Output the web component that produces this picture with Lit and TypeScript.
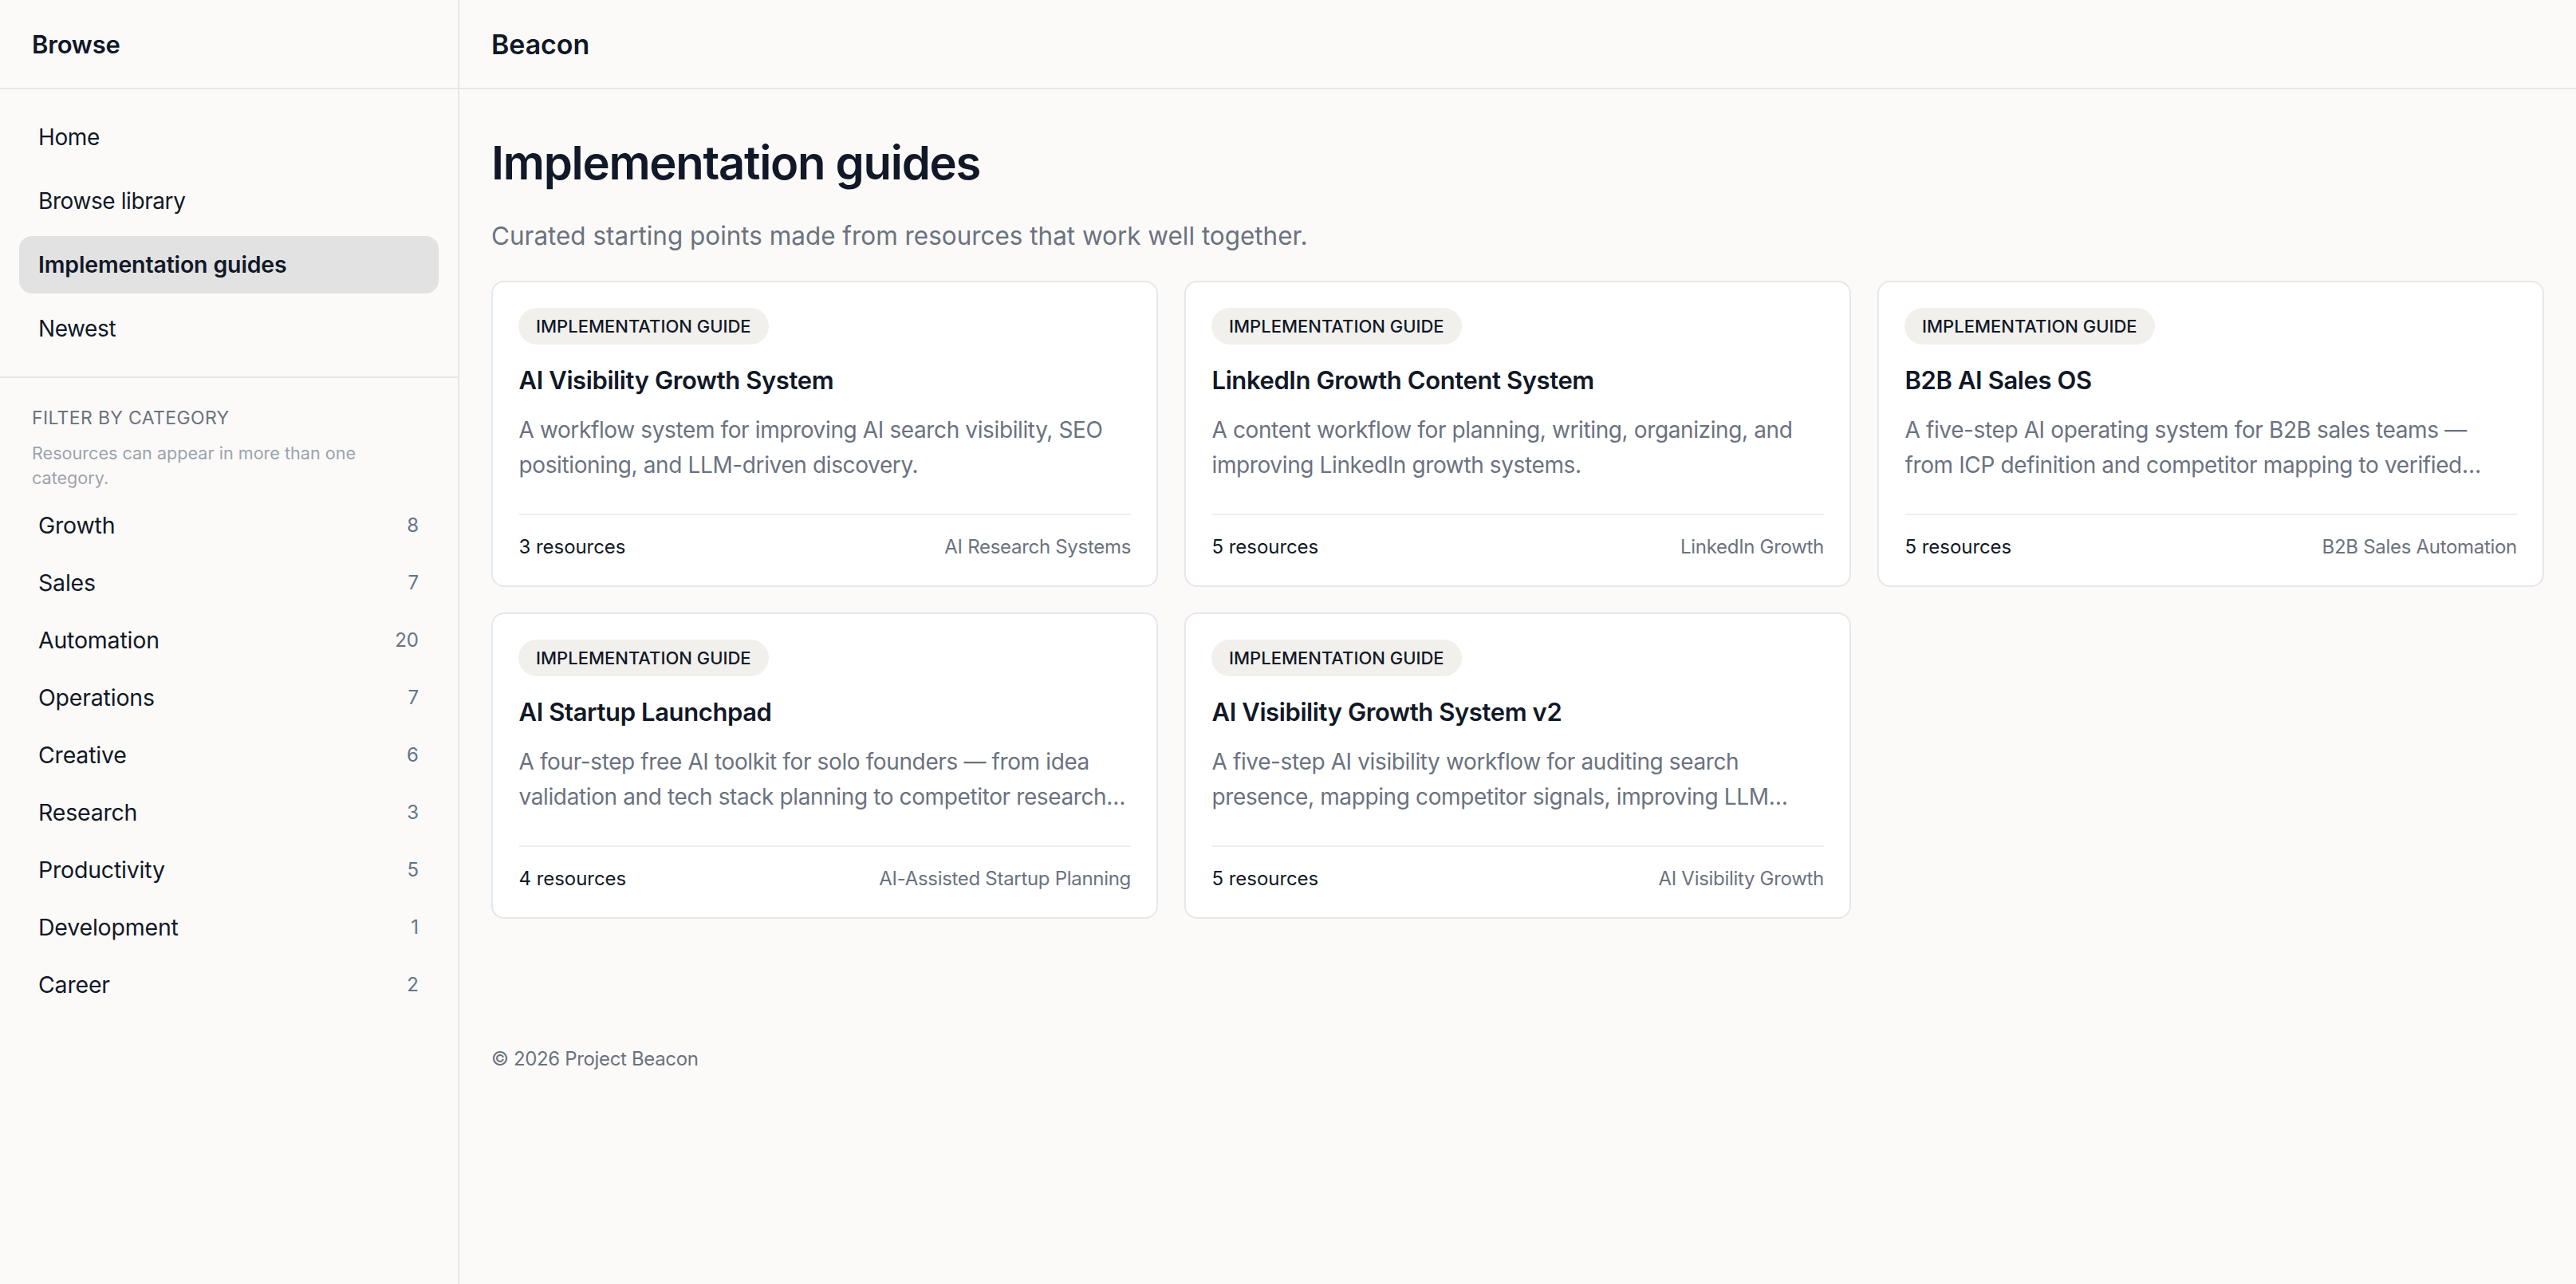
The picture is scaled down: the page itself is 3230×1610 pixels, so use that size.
import { css, html, LitElement } from "lit";
import { customElement } from "lit/decorators.js";

const NAV = ["Home", "Browse library", "Implementation guides", "Newest"];

const CATEGORIES: [string, number][] = [
  ["Growth", 8],
  ["Sales", 7],
  ["Automation", 20],
  ["Operations", 7],
  ["Creative", 6],
  ["Research", 3],
  ["Productivity", 5],
  ["Development", 1],
  ["Career", 2],
];

const GUIDES = [
  {
    title: "AI Visibility Growth System",
    desc: "A workflow system for improving AI search visibility, SEO positioning, and LLM-driven discovery.",
    count: 3,
    tag: "AI Research Systems",
  },
  {
    title: "LinkedIn Growth Content System",
    desc: "A content workflow for planning, writing, organizing, and improving LinkedIn growth systems.",
    count: 5,
    tag: "LinkedIn Growth",
  },
  {
    title: "B2B AI Sales OS",
    desc: "A five-step AI operating system for B2B sales teams — from ICP definition and competitor mapping to verified outreach and pipeline reviews.",
    count: 5,
    tag: "B2B Sales Automation",
  },
  {
    title: "AI Startup Launchpad",
    desc: "A four-step free AI toolkit for solo founders — from idea validation and tech stack planning to competitor research and launch preparation.",
    count: 4,
    tag: "AI-Assisted Startup Planning",
  },
  {
    title: "AI Visibility Growth System v2",
    desc: "A five-step AI visibility workflow for auditing search presence, mapping competitor signals, improving LLM discovery and tracking progress.",
    count: 5,
    tag: "AI Visibility Growth",
  },
];

@customElement("app-root")
export class AppRoot extends LitElement {
  static styles = css`
    :host {
      display: block;
      min-height: 100vh;
      background: #fbfaf8;
      color: #111827;
      font-family: Inter, "Noto Sans", sans-serif;
    }

    .layout {
      display: grid;
      grid-template-columns: 576px 1fr;
      min-height: 100vh;
    }

    .sidebar {
      border-right: 2px solid #e5e7eb;
    }

    .bar {
      display: flex;
      align-items: center;
      height: 110px;
      padding-left: 40px;
      border-bottom: 2px solid #e5e7eb;
      font-size: 31px;
      font-weight: 600;
      letter-spacing: -0.2px;
    }

    .bar.brand {
      font-size: 34px;
      letter-spacing: -0.1px;
    }

    .nav {
      display: flex;
      flex-direction: column;
      gap: 8px;
      padding: 24px;
      border-bottom: 2px solid #e5e7eb;
    }

    .nav-item {
      display: flex;
      align-items: center;
      height: 72px;
      padding-left: 24px;
      border-radius: 16px;
      font-size: 28px;
      line-height: 36px;
      letter-spacing: -0.41px;
      color: #111827;
    }

    .nav-item.active {
      background: #e2e2e2;
      font-size: 28.5px;
      font-weight: 600;
      letter-spacing: -0.15px;
    }

    .filters {
      padding: 34px 0 0 40px;
    }

    .filters h2 {
      margin: 0;
      font-size: 23px;
      line-height: 32px;
      font-weight: 400;
      letter-spacing: 0.35px;
      text-transform: uppercase;
      color: #6b7280;
    }

    .note {
      margin: 13px 40px 0 0;
      font-size: 21.6px;
      line-height: 30.5px;
      color: #9ca3af;
    }

    .categories {
      margin: 8px 49px 0 -16px;
    }

    .category {
      display: flex;
      align-items: center;
      justify-content: space-between;
      height: 72px;
      padding-left: 24px;
      font-size: 28.5px;
      letter-spacing: -0.2px;
      color: #111827;
    }

    .category span:last-child {
      font-size: 24px;
      letter-spacing: 0;
      color: #64748b;
    }

    .main {
      padding: 40px 40px 0;
    }

    h1 {
      margin: 0;
      font-size: 58px;
      line-height: 104px;
      font-weight: 600;
      letter-spacing: -1.3px;
    }

    .sub {
      margin: 18px 0 34px;
      font-size: 31.5px;
      line-height: 44px;
      letter-spacing: -0.03px;
      color: #6b7280;
    }

    .grid {
      display: grid;
      grid-template-columns: repeat(3, 1fr);
      gap: 32.5px 33px;
    }

    .card {
      display: flex;
      flex-direction: column;
      height: 383.5px;
      box-sizing: border-box;
      padding: 32px 32px 31px 32.5px;
      background: #fff;
      border: 2px solid #e5e7eb;
      border-radius: 16px;
    }

    .pill {
      align-self: flex-start;
      height: 46px;
      line-height: 46px;
      margin-left: -0.5px;
      padding: 0 22px;
      border-radius: 23px;
      background: #f1f0ed;
      font-size: 22px;
      font-weight: 500;
    }

    .card h3 {
      margin: 22px 0 0;
      font-size: 31px;
      line-height: 46px;
      font-weight: 600;
      letter-spacing: -0.4px;
    }

    .desc {
      margin: 17px 0 0;
      font-size: 28px;
      line-height: 44px;
      letter-spacing: -0.38px;
      color: #6b7280;
      display: -webkit-box;
      -webkit-box-orient: vertical;
      -webkit-line-clamp: 2;
      overflow: hidden;
    }

    .meta {
      display: flex;
      justify-content: space-between;
      align-items: center;
      margin-top: auto;
      padding-top: 23px;
      border-top: 2px solid #eceef1;
      font-size: 24px;
      line-height: 34px;
      letter-spacing: -0.05px;
    }

    .meta span:last-child {
      letter-spacing: -0.3px;
      color: #6b7280;
    }

    .footer {
      margin: 158.5px 0 0;
      font-size: 24px;
      line-height: 36px;
      letter-spacing: -0.35px;
      color: #6b7280;
    }
  `;

  render() {
    return html`
      <div class="layout">
        <aside class="sidebar">
          <div class="bar">Browse</div>
          <nav class="nav">
            ${NAV.map(
              (item) => html`<a class="nav-item ${item === "Implementation guides" ? "active" : ""}">${item}</a>`
            )}
          </nav>
          <section class="filters">
            <h2>Filter by category</h2>
            <p class="note">Resources can appear in more than one category.</p>
            <div class="categories">
              ${CATEGORIES.map(
                ([name, count]) => html`<div class="category"><span>${name}</span><span>${count}</span></div>`
              )}
            </div>
          </section>
        </aside>
        <div class="content">
          <div class="bar brand">Beacon</div>
          <main class="main">
            <h1>Implementation guides</h1>
            <p class="sub">Curated starting points made from resources that work well together.</p>
            <div class="grid">
              ${GUIDES.map(
                (g) => html`
                  <article class="card">
                    <span class="pill">IMPLEMENTATION GUIDE</span>
                    <h3>${g.title}</h3>
                    <p class="desc">${g.desc}</p>
                    <div class="meta"><span>${g.count} resources</span><span>${g.tag}</span></div>
                  </article>
                `
              )}
            </div>
            <p class="footer">© 2026 Project Beacon</p>
          </main>
        </div>
      </div>
    `;
  }
}
